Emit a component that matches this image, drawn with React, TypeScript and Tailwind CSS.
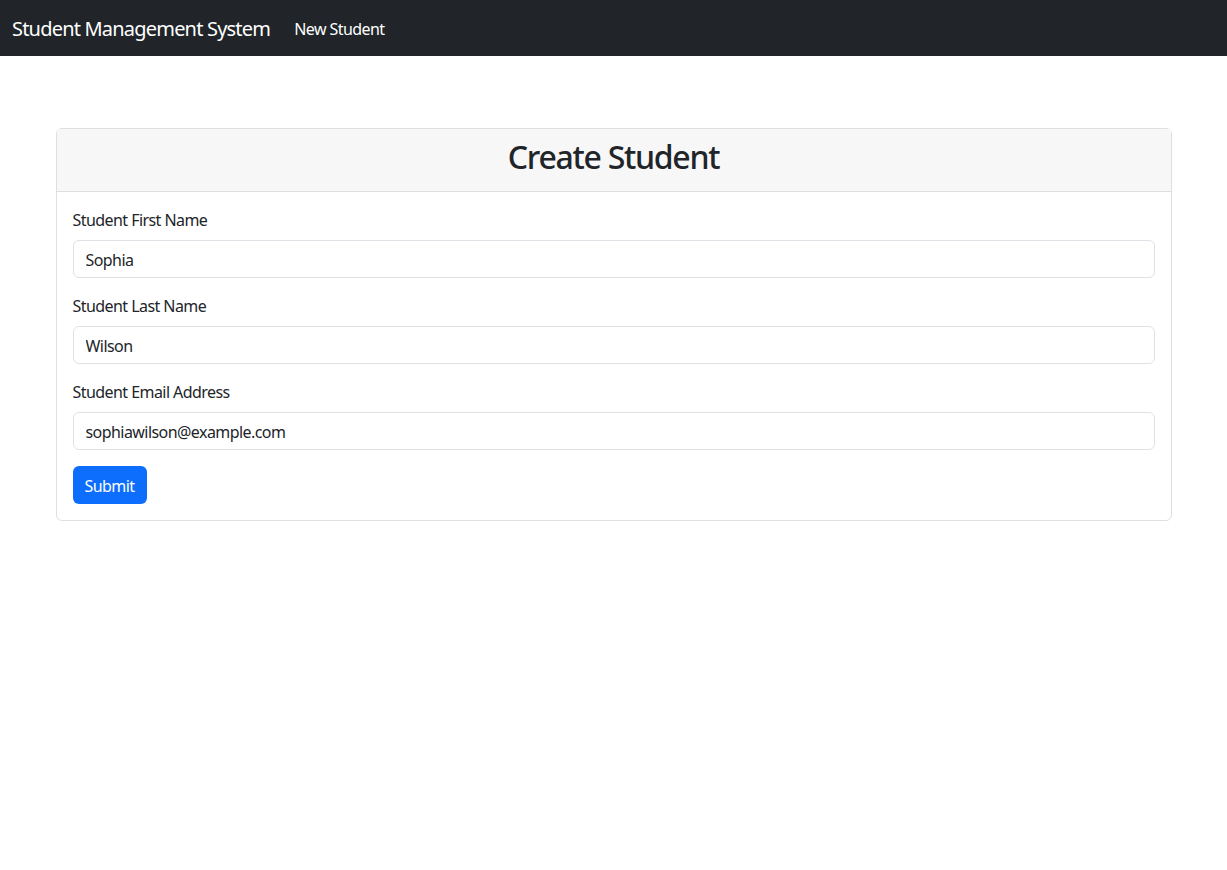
import { useState } from "react";

export default function App() {
  const [firstName, setFirstName] = useState("Sophia");
  const [lastName, setLastName] = useState("Wilson");
  const [email, setEmail] = useState("sophiawilson@example.com");

  const input =
    "block h-[38px] w-full rounded-[6px] border border-[#dee2e6] bg-white px-3 pt-px text-base text-[#212529] focus:outline-none";
  const label = "mb-2 block text-base leading-6 text-[#212529]";

  return (
    <div className="min-h-[870px] bg-white font-['Noto_Sans',sans-serif] tracking-[-0.035em] text-[#212529]">
      <nav className="flex h-14 items-center bg-[#212529] px-3">
        <span className="mr-4 pt-0.5 text-xl leading-[30px] tracking-[-0.04em] text-white">Student Management System</span>
        <span className="px-2 pt-0.5 text-base text-white">New Student</span>
      </nav>

      <div className="mx-auto mt-[72px] w-[1140px] px-3">
        <div className="rounded-[6px] border border-[#dfdfdf]">
          <div className="border-b border-[#dfdfdf] bg-[#f7f7f7] px-4 pt-[9px] pb-[7px]">
            <h2 className="mb-2 text-center text-[32px] font-medium leading-[38px] tracking-[-0.04em]">Create Student</h2>
          </div>
          <div className="p-4">
            <div className="mb-4">
              <label className={label}>Student First Name</label>
              <input className={input} value={firstName} onChange={(e) => setFirstName(e.target.value)} />
            </div>
            <div className="mb-4">
              <label className={label}>Student Last Name</label>
              <input className={input} value={lastName} onChange={(e) => setLastName(e.target.value)} />
            </div>
            <div className="mb-4">
              <label className={label}>Student Email Address</label>
              <input className={input} value={email} onChange={(e) => setEmail(e.target.value)} />
            </div>
            <button className="h-[38px] rounded-[6px] bg-[#0d6efd] px-3 pt-px text-base text-white">Submit</button>
          </div>
        </div>
      </div>
    </div>
  );
}
